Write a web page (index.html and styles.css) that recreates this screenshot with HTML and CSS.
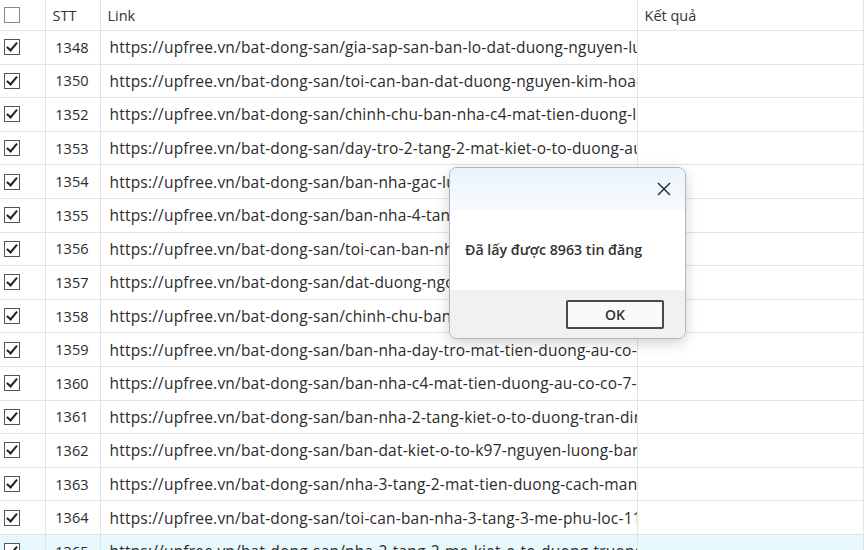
FILE: index.html
```html
<!DOCTYPE html>
<html lang="vi">
<head>
    <meta charset="UTF-8">
    <link rel="stylesheet" href="styles.css">
</head>
<body>
    <div class="grid-wrap">
        <table class="grid">
            <colgroup>
                <col class="c-check">
                <col class="c-stt">
                <col class="c-link">
                <col class="c-result">
            </colgroup>
            <thead>
                <tr>
                    <th class="cell-check"><span class="box"></span></th>
                    <th>STT</th>
                    <th>Link</th>
                    <th>Kết quả</th>
                </tr>
            </thead>
            <tbody id="rows"></tbody>
        </table>
    </div>

    <div class="msgbox">
        <div class="msgbox-title">
            <span class="msgbox-close">
                <svg width="14" height="14" viewBox="0 0 14 14"><path d="M1 1 L13 13 M13 1 L1 13" stroke="#222" stroke-width="1.4" fill="none"/></svg>
            </span>
        </div>
        <div class="msgbox-body">Đã lấy được 8963 tin đăng</div>
        <div class="msgbox-foot">
            <button class="btn-ok">OK</button>
        </div>
    </div>

    <script>
        const data = [
            [1348, 'gia-sap-san-ban-lo-dat-duong-nguyen-luong-bang'],
            [1350, 'toi-can-ban-dat-duong-nguyen-kim-hoa-khanh'],
            [1352, 'chinh-chu-ban-nha-c4-mat-tien-duong-le-do'],
            [1353, 'day-tro-2-tang-2-mat-kiet-o-to-duong-au-co'],
            [1354, 'ban-nha-gac-lung-kiet-o-to-duong-ton-dan'],
            [1355, 'ban-nha-4-tang-mat-tien-duong-2-thang-9'],
            [1356, 'toi-can-ban-nha-kiet-3m-duong-ha-huy-tap'],
            [1357, 'dat-duong-ngo-thi-nham-lien-chieu'],
            [1358, 'chinh-chu-ban-nha-2-tang-kiet-o-to'],
            [1359, 'ban-nha-day-tro-mat-tien-duong-au-co-lien'],
            [1360, 'ban-nha-c4-mat-tien-duong-au-co-co-7-phong'],
            [1361, 'ban-nha-2-tang-kiet-o-to-duong-tran-dinh-tri'],
            [1362, 'ban-dat-kiet-o-to-k97-nguyen-luong-bang-lien'],
            [1363, 'nha-3-tang-2-mat-tien-duong-cach-mang-thang-8'],
            [1364, 'toi-can-ban-nha-3-tang-3-me-phu-loc-11-thanh'],
            [1365, 'nha-2-tang-2-me-kiet-o-to-duong-truong-chinh']
        ];

        const tbody = document.getElementById('rows');
        data.forEach(function (item, i) {
            const tr = document.createElement('tr');
            if (i === data.length - 1) tr.className = 'selected';
            tr.innerHTML =
                '<td class="cell-check"><span class="box checked"></span></td>' +
                '<td class="cell-stt">' + item[0] + '</td>' +
                '<td class="cell-link">https://upfree.vn/bat-dong-san/' + item[1] + '</td>' +
                '<td></td>';
            tbody.appendChild(tr);
        });
    </script>
</body>
</html>
```

FILE: styles.css
```css
body {
    margin: 0;
    padding: 0;
    background: #fff;
    font-family: "Open Sans", "Noto Sans", sans-serif;
    color: #2b2b2b;
    overflow: hidden;
}

.grid-wrap {
    width: 864px;
    height: 550px;
    overflow: hidden;
}

.grid {
    width: 864px;
    table-layout: fixed;
    border-collapse: collapse;
    font-size: 15.5px;
}

.c-check { width: 45px; }
.c-stt { width: 55px; }
.c-link { width: 537px; }

.grid th {
    height: 30px;
    padding: 0 0 0 7px;
    text-align: left;
    font-weight: normal;
    font-size: 14.5px;
    color: #333;
    background: #fff;
    border-right: 1px solid #e4e4e4;
    border-bottom: 1px solid #e4e4e4;
}

.grid td {
    height: 32.6px;
    padding: 0 0 0 9px;
    border-right: 1px solid #e4e4e4;
    border-bottom: 1px solid #e4e4e4;
    white-space: nowrap;
    overflow: hidden;
}

.grid .cell-check {
    padding: 0 0 0 4px;
}

.grid .cell-stt {
    text-align: right;
    padding: 0 11px 0 0;
    font-size: 14.5px;
}

.grid .cell-link {
    padding-left: 9px;
    letter-spacing: 0.2px;
    text-overflow: clip;
}

.grid tr.selected td {
    background: #e6f8fc;
}

.box {
    display: block;
    width: 14px;
    height: 14px;
    border: 1px solid #555;
    background: #fff;
    position: relative;
}

thead .box {
    border-color: #8a8a8a;
}

.box.checked::after {
    content: '';
    position: absolute;
    left: 4px;
    top: 0px;
    width: 4px;
    height: 9px;
    border-right: 2px solid #222;
    border-bottom: 2px solid #222;
    transform: rotate(40deg);
}

.msgbox {
    position: absolute;
    left: 449px;
    top: 167px;
    width: 235px;
    height: 170px;
    border: 1px solid #b4b4b4;
    border-radius: 8px;
    background: #fff;
    box-shadow: 0 4px 14px rgba(0, 0, 0, 0.18);
    overflow: hidden;
    display: flex;
    flex-direction: column;
}

.msgbox-title {
    height: 42px;
    background: linear-gradient(#e9f3fb, #f7fbfe);
    display: flex;
    justify-content: flex-end;
    align-items: center;
    padding-right: 14px;
}

.msgbox-close {
    display: flex;
}

.msgbox-body {
    flex: 1;
    padding: 30px 0 0 15px;
    font-size: 14.2px;
    font-weight: 600;
    color: #333;
}

.msgbox-foot {
    height: 48px;
    background: #f1f1f1;
    display: flex;
    justify-content: flex-end;
    align-items: center;
    padding-right: 21px;
}

.btn-ok {
    width: 98px;
    height: 29px;
    border: 2px solid #4a4a4a;
    border-radius: 2px;
    background: #f9f9f9;
    font-family: "Open Sans", "Noto Sans", sans-serif;
    font-size: 14px;
    font-weight: 600;
    color: #333;
}
```
